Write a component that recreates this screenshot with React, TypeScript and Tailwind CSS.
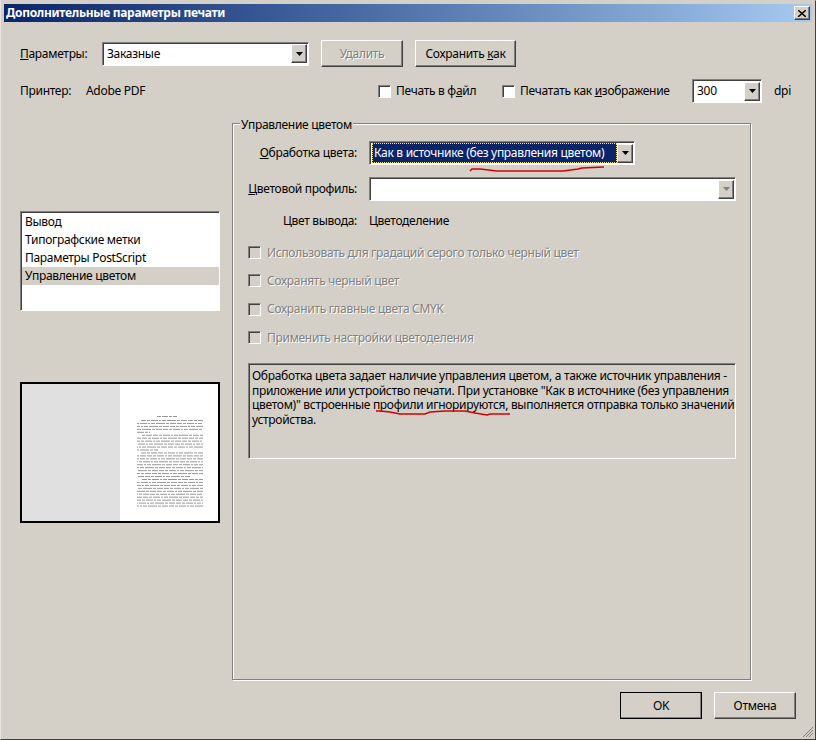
const raised = 'border border-t-white border-l-white border-r-[#404040] border-b-[#404040] shadow-[inset_-1px_-1px_0_#808080]'
const sunken = 'border border-t-[#808080] border-l-[#808080] border-r-white border-b-white shadow-[inset_1px_1px_0_#404040]'
const disabledText = 'text-[#808080] [text-shadow:1px_1px_0_#fff]'

const ArrowButton = ({ disabled }: { disabled?: boolean }) => (
  <div className={`w-[16px] h-[19px] mr-[1px] flex-shrink-0 flex items-center justify-center bg-[#d4d0c8] ${raised}`}>
    <svg width="7" height="4" viewBox="0 0 7 4">
      <path d="M0 0h7L3.5 4z" fill={disabled ? '#808080' : '#000'} />
    </svg>
  </div>
)

const Combo = ({ value, width, disabled }: { value?: string; width: string; disabled?: boolean }) => (
  <div className={`${width} h-[24px] flex items-center bg-white ${sunken}`}>
    <span className="flex-1 pl-[4px] whitespace-nowrap">{value}</span>
    <ArrowButton disabled={disabled} />
  </div>
)

const Checkbox = ({ disabled }: { disabled?: boolean }) => (
  <div className={`w-[13px] h-[13px] flex-shrink-0 ${disabled ? 'bg-[#d4d0c8]' : 'bg-white'} ${sunken}`} />
)

const DisabledCheck = ({ label }: { label: string }) => (
  <div className="flex items-center h-[13px] mb-[15.4px] ml-[15px]">
    <Checkbox disabled />
    <span className={`ml-[6px] whitespace-nowrap ${disabledText}`}>{label}</span>
  </div>
)

// thumbnail of the page text: rows of grey dashes
const previewRows = [
  [141, 203], [137, 203], [137, 203], [137, 203], [137, 150],
  [141, 203], [137, 203], [137, 203], [137, 203], [137, 203], [137, 158],
  [141, 203], [137, 203], [137, 203], [137, 203], [137, 203], [137, 203], [137, 203], [137, 203], [137, 190],
  [141, 203], [137, 203], [137, 203], [137, 203], [137, 203], [137, 203], [137, 203], [137, 203], [137, 203], [137, 203],
]

const Preview = () => (
  <div className="w-[200px] h-[141px] mt-[71px] border-2 border-black bg-[#e0e0e0] flex">
    <div className="w-[98px]" />
    <svg width="98" height="137" viewBox="120 384 98 137" className="bg-white">
      <g stroke="#969696" strokeWidth="1">
        <line x1="157" y1="416.5" x2="177" y2="416.5" strokeDasharray="4 1 6 1 3 1" />
        {previewRows.map(([a, b], i) => (
          <line
            key={i}
            x1={a}
            x2={b}
            y1={420.5 + i * 2.95}
            y2={420.5 + i * 2.95}
            strokeDasharray="5 1 3 1 7 1 2 1 4 1 9 1 3 1 6 1"
            strokeDashoffset={i * 7}
          />
        ))}
      </g>
    </svg>
  </div>
)

const menuItems = ['Вывод', 'Типографские метки', 'Параметры PostScript', 'Управление цветом']

export default function App() {
  return (
    <div className="relative w-[816px] h-[740px] overflow-hidden flex flex-col bg-[#d4d0c8] text-[12px] leading-[14px] tracking-[-0.3px] text-black border border-t-[#d4d0c8] border-l-[#e8e6e0] border-r-[#404040] border-b-[#404040] font-['Noto_Sans',sans-serif]">
      {/* Title bar */}
      <div className="mx-[3px] mt-[3px] h-[18px] flex items-center justify-between pl-[2px] pr-[2px] bg-gradient-to-r from-[#0a246a] to-[#a6caf0]">
        <span className="font-bold text-white whitespace-nowrap">Дополнительные параметры печати</span>
        <div className={`w-[16px] h-[14px] flex items-center justify-center bg-[#d4d0c8] ${raised}`}>
          <svg width="8" height="7" viewBox="0 0 8 7" fill="none" stroke="#000" strokeWidth="1.4">
            <path d="M0 0l8 7M8 0L0 7" />
          </svg>
        </div>
      </div>

      {/* Presets row */}
      <div className="flex items-center h-[27px] mt-[18px] pl-[19px]">
        <span className="w-[82px]"><span className="underline">П</span>араметры:</span>
        <Combo value="Заказные" width="w-[207px]" />
        <div className={`w-[82px] h-[27px] ml-[12px] flex items-center justify-center ${raised} ${disabledText}`}>Удалить</div>
        <div className={`w-[101px] h-[27px] ml-[12px] flex items-center justify-center ${raised}`}>
          <span>Сохранить <span className="underline">к</span>ак</span>
        </div>
      </div>

      {/* Printer row */}
      <div className="flex items-center h-[24px] mt-[12px] pl-[19px]">
        <span className="w-[66px]">Принтер:</span>
        <span className="w-[292px]">Adobe PDF</span>
        <Checkbox />
        <span className="w-[106px] ml-[5px] whitespace-nowrap">Печать в ф<span className="underline">а</span>йл</span>
        <Checkbox />
        <span className="w-[172px] ml-[5px] whitespace-nowrap">Печатать как <span className="underline">и</span>зображение</span>
        <Combo value="300" width="w-[70px]" />
        <span className="ml-[12px]">dpi</span>
      </div>

      <div className="flex mt-[13px] pl-[19px]">
        {/* Left column */}
        <div className="w-[212px] pt-[95px]">
          <div className={`w-[200px] h-[100px] bg-white py-[1px] pl-[1px] ${sunken}`}>
            {menuItems.map((item, i) => (
              <div key={item} className={`h-[18px] pl-[3px] flex items-center ${i === 3 ? 'bg-[#d4d0c8]' : ''}`}>
                {item}
              </div>
            ))}
          </div>
          <Preview />
        </div>

        {/* Color management group */}
        <fieldset className="w-[519px] h-[564px] border border-[#808080] shadow-[inset_1px_1px_0_#fff,1px_1px_0_#fff]">
          <legend className="ml-[7px] px-[1px] h-[14px] leading-[18px] bg-[#d4d0c8]">Управление цветом</legend>

          <div className="flex items-center mt-[11px]">
            <span className="w-[124px] mr-[12px] text-right whitespace-nowrap"><span className="underline">О</span>бработка цвета:</span>
            <div className={`w-[266px] h-[24px] flex items-center bg-white ${sunken}`}>
              <span className="flex-1 h-[20px] ml-[2px] pl-[2px] flex items-center whitespace-nowrap overflow-hidden bg-[#0a246a] text-white outline outline-1 outline-dotted outline-offset-[-1px] outline-[#f3e28a]">
                Как в источнике (без управления цветом)
              </span>
              <ArrowButton />
            </div>
          </div>

          <div className="flex items-center mt-[12px]">
            <span className="w-[124px] mr-[12px] text-right whitespace-nowrap"><span className="underline">Ц</span>ветовой профиль:</span>
            <Combo width="w-[367px]" disabled />
          </div>

          <div className="flex items-center mt-[13px] mb-[18px]">
            <span className="w-[124px] mr-[12px] text-right whitespace-nowrap">Цвет вывода:</span>
            <span>Цветоделение</span>
          </div>

          <DisabledCheck label="Использовать для градаций серого только черный цвет" />
          <DisabledCheck label="Сохранять черный цвет" />
          <DisabledCheck label="Сохранить главные цвета CMYK" />
          <DisabledCheck label="Применить настройки цветоделения" />

          <div className={`w-[488px] h-[96px] ml-[15px] mt-[18.8px] pt-[5px] pl-[3px] leading-[14.6px] whitespace-nowrap ${sunken}`}>
            Обработка цвета задает наличие управления цветом, а также источник управления -<br />
            приложение или устройство печати. При установке "Как в источнике (без управления<br />
            цветом)" встроенные профили игнорируются, выполняется отправка только значений<br />
            устройства.
          </div>
        </fieldset>
      </div>

      {/* Footer buttons */}
      <div className="flex justify-end mt-[12px] pr-[19px]">
        <div className={`w-[82px] h-[27px] flex items-center justify-center outline outline-1 outline-black outline-offset-[-1px] ${raised}`}>OK</div>
        <div className={`w-[82px] h-[27px] ml-[12px] flex items-center justify-center ${raised}`}>Отмена</div>
      </div>

      {/* Red pen marks on top of the dialog */}
      <svg className="absolute left-[-1px] top-[-1px] pointer-events-none" width="816" height="740" fill="none" stroke="#d40000" strokeWidth="1.5">
        <path d="M470 171l2-2h8l17 2h66l15-2 4-1 22-1" />
        <path d="M376 411l4 0 10 1 10 2h25l5-2 15-1h20l10 2 12 2 3-1h20" />
      </svg>

      {/* Resize grip */}
      <svg className="absolute right-[1px] bottom-[1px]" width="12" height="12" viewBox="0 0 12 12" stroke="#808080" strokeWidth="1">
        <path d="M11 1L1 11M11 4L4 11M11 7L7 11" />
      </svg>
    </div>
  )
}
